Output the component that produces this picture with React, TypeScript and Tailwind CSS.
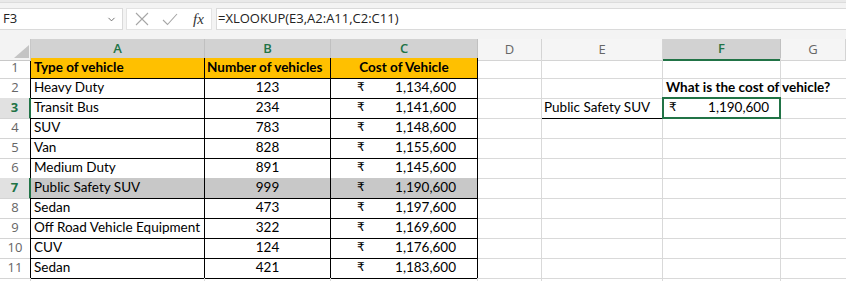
import { ChevronDown } from 'lucide-react'

const GRID = 'grid grid-cols-[31px_174px_126px_147px_64px_121px_118px_1fr]'
const CELL_FONT = "font-['Lato',sans-serif] text-[13.5px] leading-[19px] text-black"
const HEAD_FONT = "font-['Open_Sans',sans-serif] text-[13px]"

const data: [string, number, string][] = [
  ['Heavy Duty', 123, '1,134,600'],
  ['Transit Bus', 234, '1,141,600'],
  ['SUV', 783, '1,148,600'],
  ['Van', 828, '1,155,600'],
  ['Medium Duty', 891, '1,145,600'],
  ['Public Safety SUV', 999, '1,190,600'],
  ['Sedan', 473, '1,197,600'],
  ['Off Road Vehicle Equipment', 322, '1,169,600'],
  ['CUV', 124, '1,176,600'],
  ['Sedan', 421, '1,183,600'],
]

const columns = ['A', 'B', 'C', 'D', 'E', 'F', 'G']
const selectedCols = ['A', 'B', 'C', 'F']

function FormulaBar() {
  return (
    <div className="bg-[#f3f3f3]">
      <div className="h-[3px] border-b border-[#dcdcdc] bg-[#e9e9e9]" />
      <div className="flex h-[36px] pt-[5px] pb-[9px]">
        <div className="flex w-[123px] items-center justify-between border-y border-r border-[#dadada] bg-white pl-[3px] pr-[5px]">
          <span className={HEAD_FONT + ' text-[#222]'}>F3</span>
          <ChevronDown size={11} strokeWidth={2} className="text-[#666]" />
        </div>
        <div className="ml-[3px] flex w-[86px] items-center border border-[#e3e3e3] bg-white pl-[8px]">
          <svg width="14" height="14" viewBox="0 0 14 14" className="text-[#a6a6a6]">
            <path d="M1 1 L13 13 M13 1 L1 13" stroke="currentColor" strokeWidth="1.1" fill="none" />
          </svg>
          <svg width="16" height="14" viewBox="0 0 16 14" className="ml-[13px] text-[#a6a6a6]">
            <path d="M1 8 L5.5 12.5 L15 2" stroke="currentColor" strokeWidth="1.1" fill="none" />
          </svg>
          <span className="ml-[15px] font-['Liberation_Serif',serif] text-[15px] italic text-[#333]">fx</span>
        </div>
        <div className="ml-[4px] flex flex-1 items-center border-y border-l border-[#dadada] bg-white pl-[1px]">
          <span className={HEAD_FONT + ' text-[13.5px] text-[#222]'}>=XLOOKUP(E3,A2:A11,C2:C11)</span>
        </div>
      </div>
    </div>
  )
}

function ColumnHeaders() {
  return (
    <div className={GRID + ' h-[19px]'}>
      <div className="relative border-r border-b border-[#c8c8c8] bg-[#f3f3f3]">
        <svg width="15" height="13" viewBox="0 0 15 13" className="absolute right-[1px] bottom-[2px]">
          <polygon points="15,0 15,13 0,13" fill="#c4c4c4" />
        </svg>
      </div>
      {columns.map((c) => {
        const sel = selectedCols.includes(c)
        return (
          <div
            key={c}
            className={
              sel
                ? HEAD_FONT + ' flex items-center justify-center border-r border-b-2 border-r-[#c0c0c0] border-b-[#217346] bg-[#d2d2d2] font-semibold text-[#217346]'
                : HEAD_FONT + ' flex items-center justify-center border-r border-b border-[#d4d4d4] bg-[#f5f5f5] text-[#666]'
            }
          >
            {c}
          </div>
        )
      })}
    </div>
  )
}

function RowHeader({ n, label = true }: { n: number; label?: boolean }) {
  const sel = n === 3 || n === 7
  if (sel) {
    return (
      <div className={HEAD_FONT + ' flex items-center justify-center border-r-2 border-b border-r-[#217346] border-b-[#d4d4d4] bg-[#e1e1e1] font-bold text-[#217346]'}>
        {n}
      </div>
    )
  }
  return (
    <div
      className={
        n <= 11
          ? HEAD_FONT + ' flex items-center justify-center border-r border-b border-r-black border-b-[#d4d4d4] text-[#666]'
          : HEAD_FONT + ' flex items-center justify-center border-r border-b border-[#d4d4d4] text-[#666]'
      }
    >
      {label ? n : null}
    </div>
  )
}

function Rupee({ value, left, right }: { value: string; left: string; right: string }) {
  return (
    <div className={'flex justify-between ' + left + ' ' + right}>
      <span className="font-['DejaVu_Sans',sans-serif] text-[12px]">₹</span>
      <span>{value}</span>
    </div>
  )
}

function Gap({ extra = '' }: { extra?: string }) {
  return <div className={CELL_FONT + ' border-r border-b border-[#d9d9d9] ' + extra} />
}

export default function App() {
  return (
    <div className="h-[281px] w-[846px] overflow-hidden bg-white">
      <FormulaBar />
      <ColumnHeaders />

      {/* row 1 */}
      <div className={GRID + ' h-[20px]'}>
        <RowHeader n={1} />
        <div className={CELL_FONT + ' border-r border-b border-black bg-[#ffc000] pl-[3px] font-bold'}>Type of vehicle</div>
        <div className={CELL_FONT + ' border-r border-b border-black bg-[#ffc000] pl-[2px] font-bold whitespace-nowrap'}>Number of vehicles</div>
        <div className={CELL_FONT + ' border-r border-b border-black bg-[#ffc000] text-center font-bold'}>Cost of Vehicle</div>
        <Gap />
        <Gap />
        <Gap />
        <Gap extra="border-r-0" />
      </div>

      {data.map(([name, count, cost], i) => {
        const n = i + 2
        const fill = n === 7 ? ' bg-[#c8c8c8]' : ''
        return (
          <div key={n} className={GRID + ' h-[20px]'}>
            <RowHeader n={n} />
            <div className={CELL_FONT + ' border-r border-b border-black pl-[3px] whitespace-nowrap' + fill}>{name}</div>
            <div className={CELL_FONT + ' border-r border-b border-black text-center' + fill}>{count}</div>
            <div className={CELL_FONT + ' border-r border-b border-black' + fill}>
              <Rupee value={cost} left="pl-[26px]" right="pr-[21px]" />
            </div>
            <Gap />
            {n === 3 ? (
              <div className={CELL_FONT + ' border-r border-b border-r-[#d9d9d9] border-b-black pl-[2px] whitespace-nowrap'}>Public Safety SUV</div>
            ) : (
              <Gap />
            )}
            {n === 2 ? (
              <div className={CELL_FONT + ' overflow-visible border-r border-b border-[#d9d9d9] pl-[3px] font-bold whitespace-nowrap'}>What is the cost of vehicle?</div>
            ) : n === 3 ? (
              <div className={CELL_FONT + ' relative border-r border-b border-[#d9d9d9]'}>
                <Rupee value="1,190,600" left="pl-[6px]" right="pr-[11px]" />
                <div className="absolute -top-px -left-px right-[-1px] bottom-[-1px] border-2 border-[#217346]" />
              </div>
            ) : (
              <Gap />
            )}
            <Gap extra="border-r-0" />
          </div>
        )
      })}

      {/* row 12, only its top edge shows */}
      <div className={GRID + ' h-[20px]'}>
        <RowHeader n={12} label={false} />
        <Gap />
        <Gap />
        <Gap />
        <Gap />
        <Gap />
        <Gap />
        <Gap extra="border-r-0" />
      </div>
    </div>
  )
}
